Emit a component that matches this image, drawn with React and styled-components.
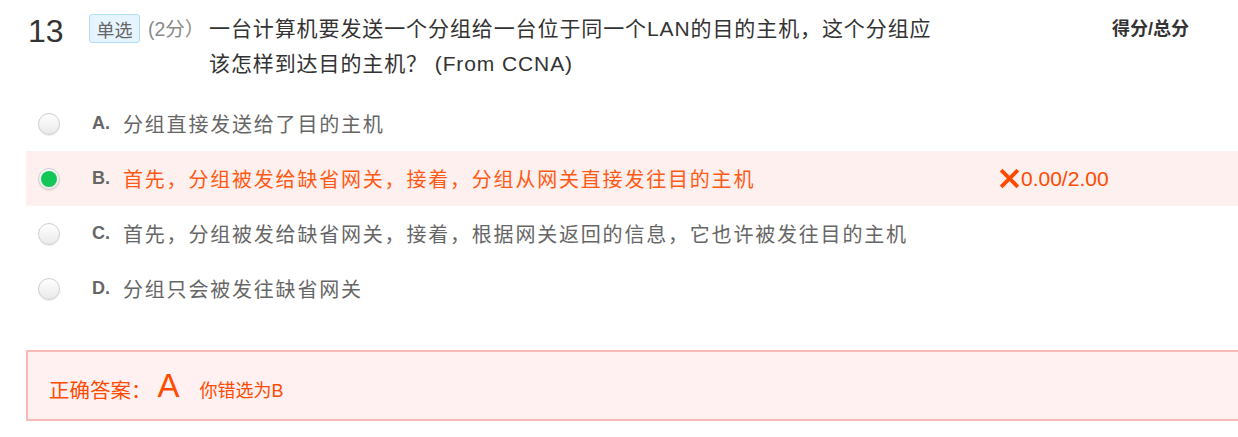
import React from "react";
import styled, { createGlobalStyle } from "styled-components";

const GlobalStyle = createGlobalStyle`
  html, body {
    margin: 0;
    padding: 0;
    background: #ffffff;
    overflow: hidden;
  }
  body {
    font-family: "Liberation Sans", "Noto Sans CJK SC", sans-serif;
  }
`;

const Page = styled.div`
  width: 1238px;
  height: 437px;
  padding-left: 26px;
  box-sizing: border-box;
  overflow: hidden;
`;

const Header = styled.div`
  display: flex;
  align-items: flex-start;
  padding-top: 11px;
  height: 86px;
  box-sizing: border-box;
`;

const Num = styled.div`
  width: 61px;
  padding-left: 2px;
  font-size: 32px;
  line-height: 40px;
  color: #333;
`;

const Badge = styled.span`
  display: inline-flex;
  align-items: center;
  justify-content: center;
  width: 51px;
  height: 29px;
  margin-top: 3px;
  box-sizing: border-box;
  border: 1px solid #b5ddf8;
  border-radius: 3px;
  background: #e5f4fe;
  color: #666;
  font-size: 18px;
`;

const Points = styled.span`
  margin-left: 8px;
  width: 61px;
  font-size: 19.5px;
  line-height: 36px;
  color: #8a8a8a;
`;

const Question = styled.div`
  width: 732px;
  font-size: 21px;
  letter-spacing: 0.9px;
  line-height: 35px;
  color: #333;
`;

const ScoreHead = styled.div`
  margin-left: auto;
  width: 126px;
  font-size: 18px;
  font-weight: bold;
  line-height: 36px;
  color: #333;
`;

const Options = styled.div`
  display: flex;
  flex-direction: column;
  margin-top: 10px;
`;

const Row = styled.div`
  display: flex;
  align-items: center;
  height: 55px;
  padding-left: 12px;
  background: ${(p) => (p.$wrong ? "#fff0f0" : "transparent")};
  color: ${(p) => (p.$wrong ? "#ff5a14" : "#666")};
`;

const Radio = styled.span`
  position: relative;
  width: 22px;
  height: 22px;
  box-sizing: border-box;
  border-radius: 50%;
  border: 1px solid #cfcfcf;
  background: linear-gradient(#ffffff, #e9e9e9);
  box-shadow: 0 1px 1px rgba(0, 0, 0, 0.08);

  &::after {
    content: "";
    display: ${(p) => (p.$checked ? "block" : "none")};
    position: absolute;
    left: 2px;
    top: 2px;
    width: 16px;
    height: 16px;
    border-radius: 50%;
    background: #14c655;
  }
`;

const Letter = styled.span`
  margin-left: 32px;
  width: 31px;
  font-size: 18px;
  font-weight: bold;
  color: #666;
`;

const OptText = styled.span`
  width: 875px;
  font-size: 20px;
  letter-spacing: 1.8px;
`;

const Score = styled.span`
  display: flex;
  align-items: center;
  font-size: 21px;
  color: #ff4b00;
`;

const Cross = styled.svg`
  width: 23px;
  height: 23px;
`;

const Answer = styled.div`
  display: flex;
  align-items: center;
  margin-top: 34px;
  height: 71px;
  padding-left: 21px;
  border: 2px solid #f9b9b9;
  border-right: none;
  box-sizing: border-box;
  background: #fff1f1;
  color: #ff4b00;
`;

const AnsLabel = styled.span`
  font-size: 20.5px;
  padding-top: 6px;
`;

const AnsLetter = styled.span`
  font-size: 33px;
  margin-left: 6px;
`;

const AnsNote = styled.span`
  margin-left: 20px;
  padding-top: 6px;
  font-size: 18px;
`;

const options = [
  { key: "A", text: "分组直接发送给了目的主机" },
  { key: "B", text: "首先，分组被发给缺省网关，接着，分组从网关直接发往目的主机", wrong: true },
  { key: "C", text: "首先，分组被发给缺省网关，接着，根据网关返回的信息，它也许被发往目的主机" },
  { key: "D", text: "分组只会被发往缺省网关" },
];

export default function App() {
  return (
    <Page>
      <GlobalStyle />
      <Header>
        <Num>13</Num>
        <Badge>单选</Badge>
        <Points>(2分）</Points>
        <Question>
          一台计算机要发送一个分组给一台位于同一个LAN的目的主机，这个分组应该怎样到达目的主机？ (From CCNA)
        </Question>
        <ScoreHead>得分/总分</ScoreHead>
      </Header>
      <Options>
        {options.map((o) => (
          <Row key={o.key} $wrong={o.wrong}>
            <Radio $checked={o.wrong} />
            <Letter>{o.key}.</Letter>
            <OptText>{o.text}</OptText>
            {o.wrong && (
              <Score>
                <Cross viewBox="0 0 22 22">
                  <path d="M3 3 L19 19 M19 3 L3 19" stroke="#ff4b00" strokeWidth="3.6" />
                </Cross>
                0.00/2.00
              </Score>
            )}
          </Row>
        ))}
      </Options>
      <Answer>
        <AnsLabel>正确答案：</AnsLabel>
        <AnsLetter>A</AnsLetter>
        <AnsNote>你错选为B</AnsNote>
      </Answer>
    </Page>
  );
}
